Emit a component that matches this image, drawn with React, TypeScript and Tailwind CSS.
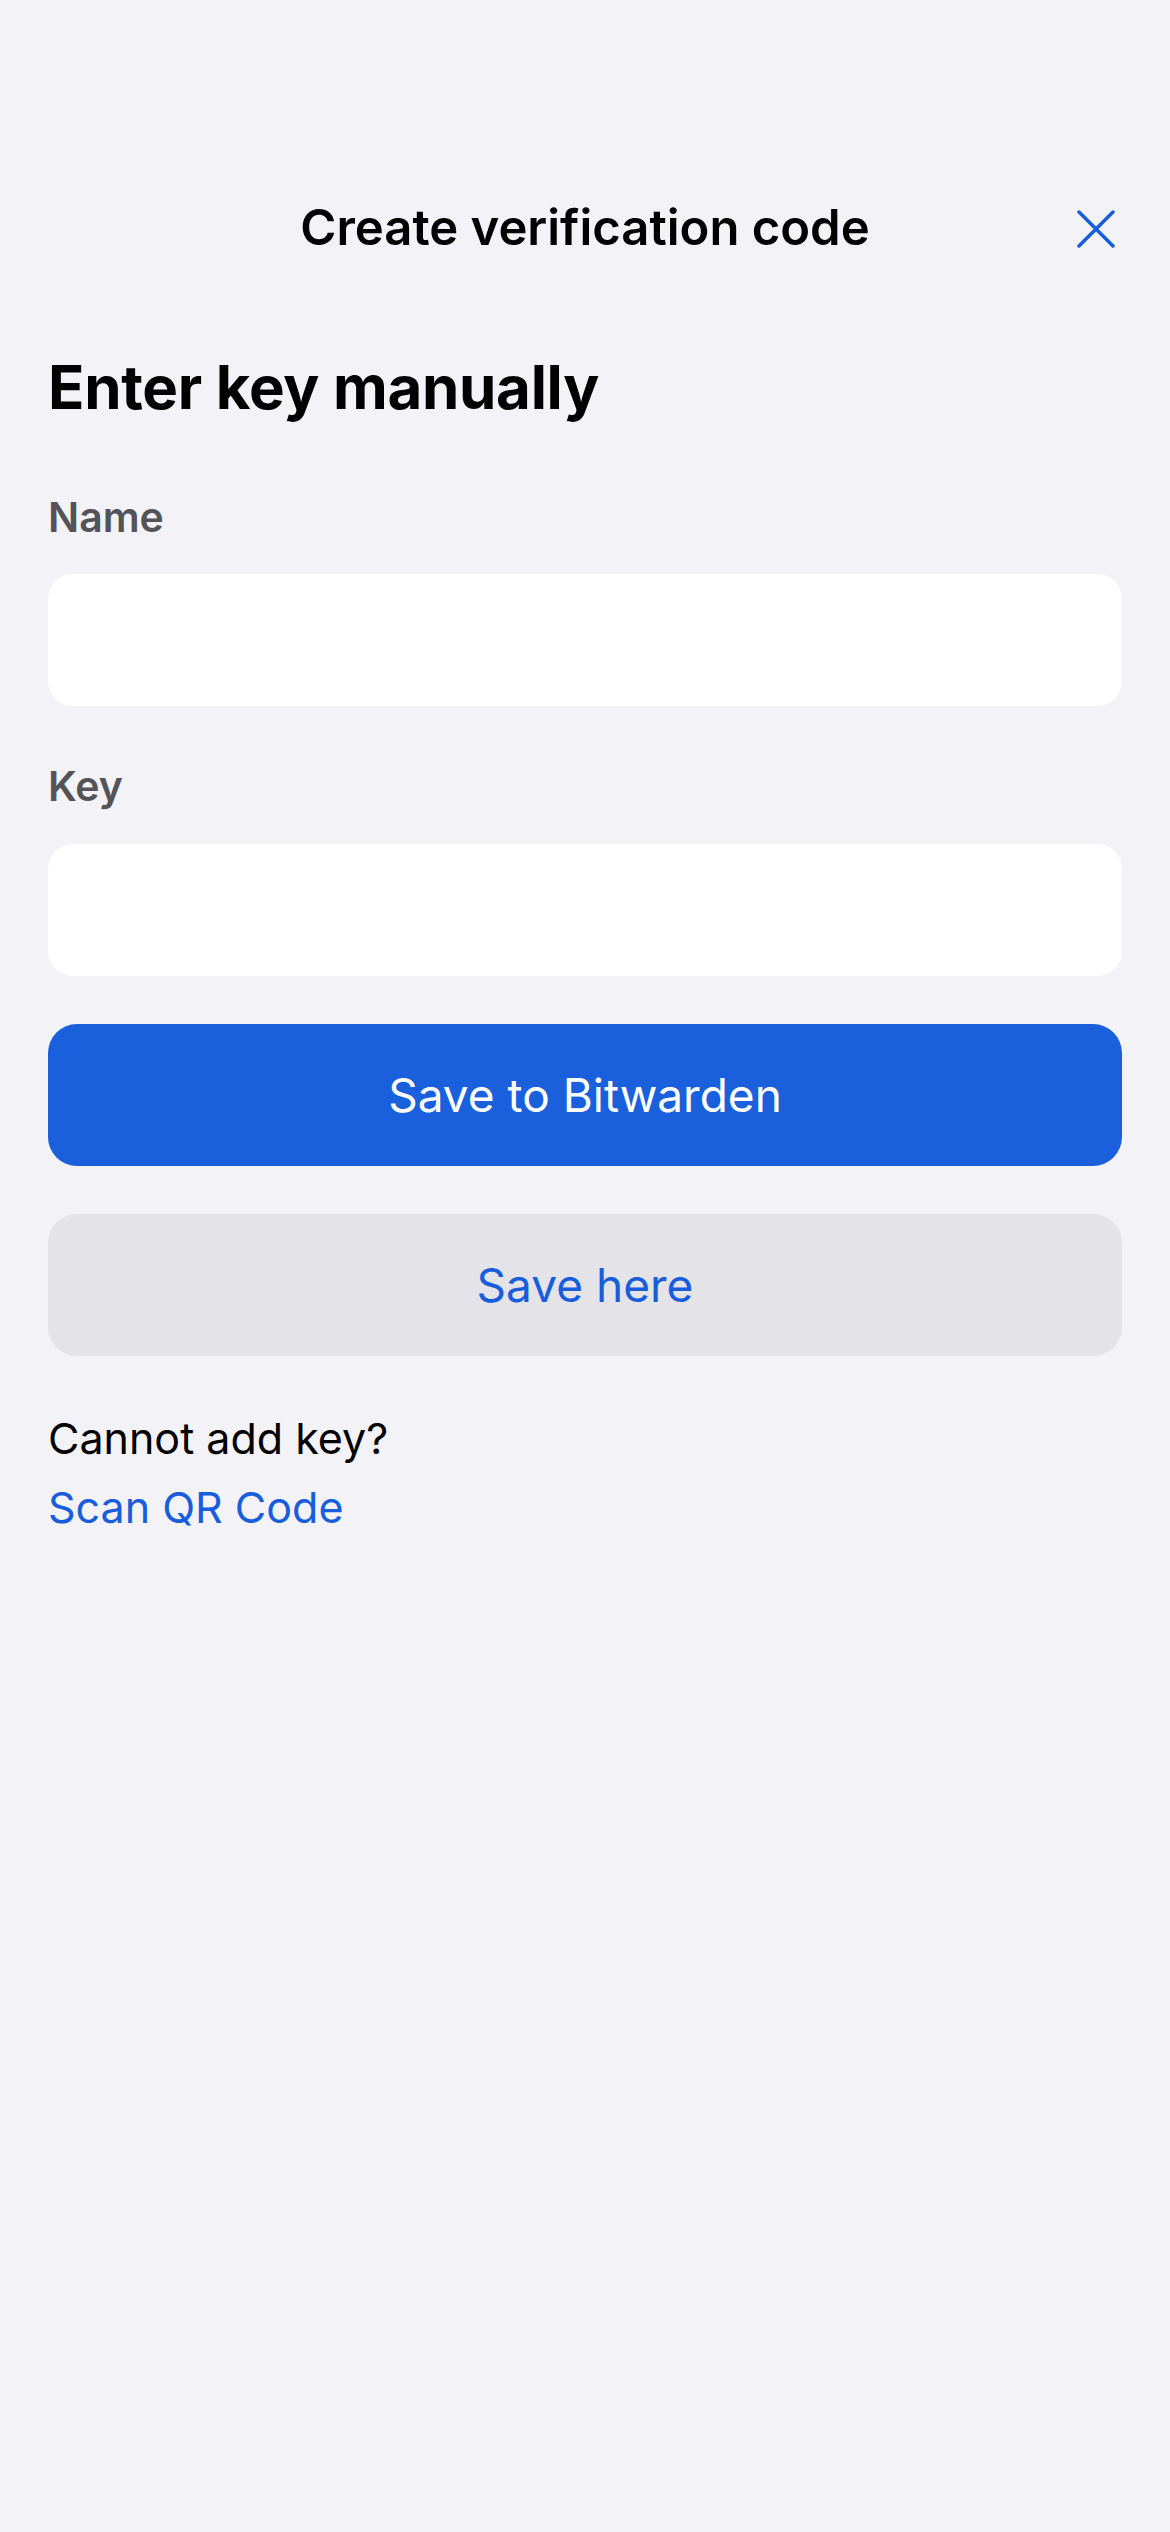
import React from "react";
import { useState } from "react";

const App = () => {
  // field values
  const [name, setName] = useState("");
  const [secret, setSecret] = useState("");

  return (
    <div className="min-h-[2532px] w-full bg-[#f2f2f7] font-['Inter','Liberation_Sans',sans-serif] text-black">
      {/* nav bar */}
      <header className="grid grid-cols-[1fr_auto_1fr] items-center px-[48px] pt-[195px]">
        <div />
        <h1 className="text-[49px] leading-[64px] font-semibold">
          Create verification code
        </h1>
        <div className="flex justify-end pr-[4px] pt-[2px]">
          <button
            type="button"
            aria-label="Close"
            className="flex h-[64px] w-[44px] items-center justify-center"
          >
            <svg width="38" height="38" viewBox="0 0 38 38" fill="none">
              <path
                d="M2 2L36 36M36 2L2 36"
                stroke="#175ddc"
                strokeWidth="3.5"
                strokeLinecap="round"
              />
            </svg>
          </button>
        </div>
      </header>

      <main className="flex flex-col px-[48px] pt-[91px]">
        <h2 className="text-[60px] leading-[70px] font-bold tracking-[-0.3px]">
          Enter key manually
        </h2>

        <label className="mt-[70px] text-[41px] leading-[50px] font-semibold text-[#545458]">
          Name
        </label>
        <input
          aria-label="Name"
          className="mt-[32px] h-[132px] w-full rounded-[25px] bg-white px-[40px] text-[46px] outline-none"
          value={name}
          onChange={(e) => setName(e.target.value)}
        />

        <label className="mt-[55px] text-[41px] leading-[50px] font-semibold text-[#545458]">
          Key
        </label>
        <input
          aria-label="Key"
          className="mt-[33px] h-[132px] w-full rounded-[25px] bg-white px-[40px] text-[46px] outline-none"
          value={secret}
          onChange={(e) => setSecret(e.target.value)}
        />

        <button
          type="button"
          className="mt-[48px] h-[142px] w-full rounded-[29px] bg-[#1a5fdc] text-[46px] text-white"
        >
          Save to Bitwarden
        </button>
        <button
          type="button"
          className="mt-[48px] h-[142px] w-full rounded-[29px] bg-[#e3e3e8] text-[46px] text-[#175ddc]"
        >
          Save here
        </button>

        <div className="mt-[48px] flex flex-col items-start text-[43px] leading-[69px]">
          <p>Cannot add key?</p>
          <button type="button" className="text-[#175ddc]">
            Scan QR Code
          </button>
        </div>
      </main>
    </div>
  );
};

export default App;
